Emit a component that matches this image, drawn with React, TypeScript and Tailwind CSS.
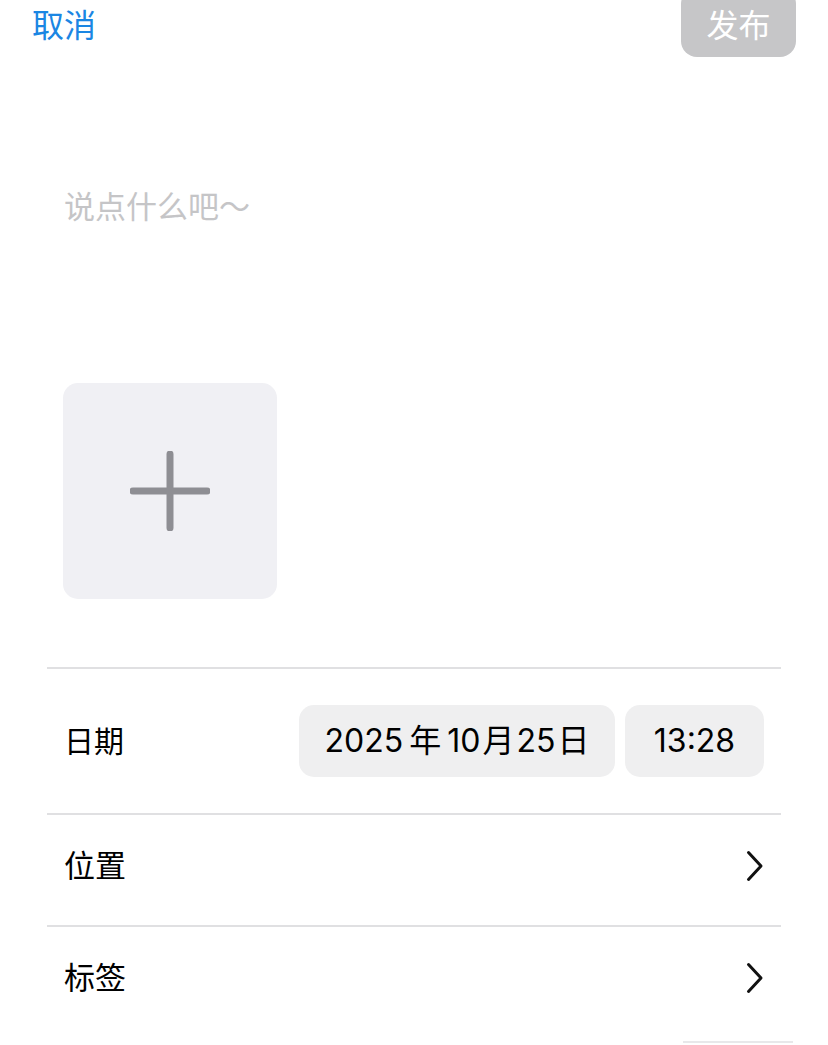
import React from "react";

const Chevron = () => (
  <svg width="18" height="32" viewBox="0 0 18 32" fill="none">
    <path d="M2.5 2.5 L15 16 L2.5 29.5" stroke="#111" strokeWidth="3" strokeLinecap="round" strokeLinejoin="round" />
  </svg>
);

const Row = ({ label }: { label: string }) => (
  <div className="flex h-[110px] items-center justify-between pl-[17px] pr-[17px] pb-[8px]">
    <span className="text-[31px] leading-[40px] text-black">{label}</span>
    <Chevron />
  </div>
);

const Divider = () => <div className="h-[2px] bg-[#e0e0e2]" />;

export default function App() {
  return (
    <div className="relative h-[1045px] w-[828px] overflow-hidden bg-white font-['Inter','Noto_Sans_CJK_SC',sans-serif]">
      {/* top bar */}
      <div className="flex items-start justify-between pl-[32px] pr-[32px]">
        <button className="h-[51px] text-[32px] leading-[51px] text-[#1b86e3]">取消</button>
        <button className="mt-[-12px] h-[69px] w-[115px] rounded-[16px] bg-[#c6c6c8] pt-[6px] text-[32px] leading-[40px] text-white">
          发布
        </button>
      </div>

      <div className="mt-[130px] pl-[64px] text-[31px] leading-[40px] text-[#c5c5c7]">说点什么吧～</div>

      <div className="ml-[63px] mt-[156px] flex h-[216px] w-[214px] items-center justify-center rounded-[15px] bg-[#f0f0f4]">
        <svg width="80" height="80" viewBox="0 0 80 80">
          <path d="M40 3 V77 M3 40 H77" stroke="#8e8e93" strokeWidth="7" strokeLinecap="round" />
        </svg>
      </div>

      <div className="mt-[68px] px-[47px]">
        <Divider />
        <div className="flex h-[144px] items-center justify-between pl-[17px] pr-[17px]">
          <span className="text-[30px] leading-[40px] text-black">日期</span>
          <div className="flex gap-[10px]">
            <div className="flex h-[72px] w-[316px] items-center justify-center rounded-[15px] bg-[#efeff0] text-[32px] text-black">
              2025<span className="mx-[6px]">年</span>10<span className="mx-[2px]">月</span>25<span className="ml-[2px]">日</span>
            </div>
            <div className="flex h-[72px] w-[139px] items-center justify-center rounded-[15px] bg-[#efeff0] text-[32px] text-black">
              13:28
            </div>
          </div>
        </div>
        <Divider />
        <Row label="位置" />
        <Divider />
        <Row label="标签" />
        <div className="ml-auto mr-[-12px] mt-[4px] h-[2px] w-[110px] bg-[#e8e8ea]" />
      </div>
    </div>
  );
}
